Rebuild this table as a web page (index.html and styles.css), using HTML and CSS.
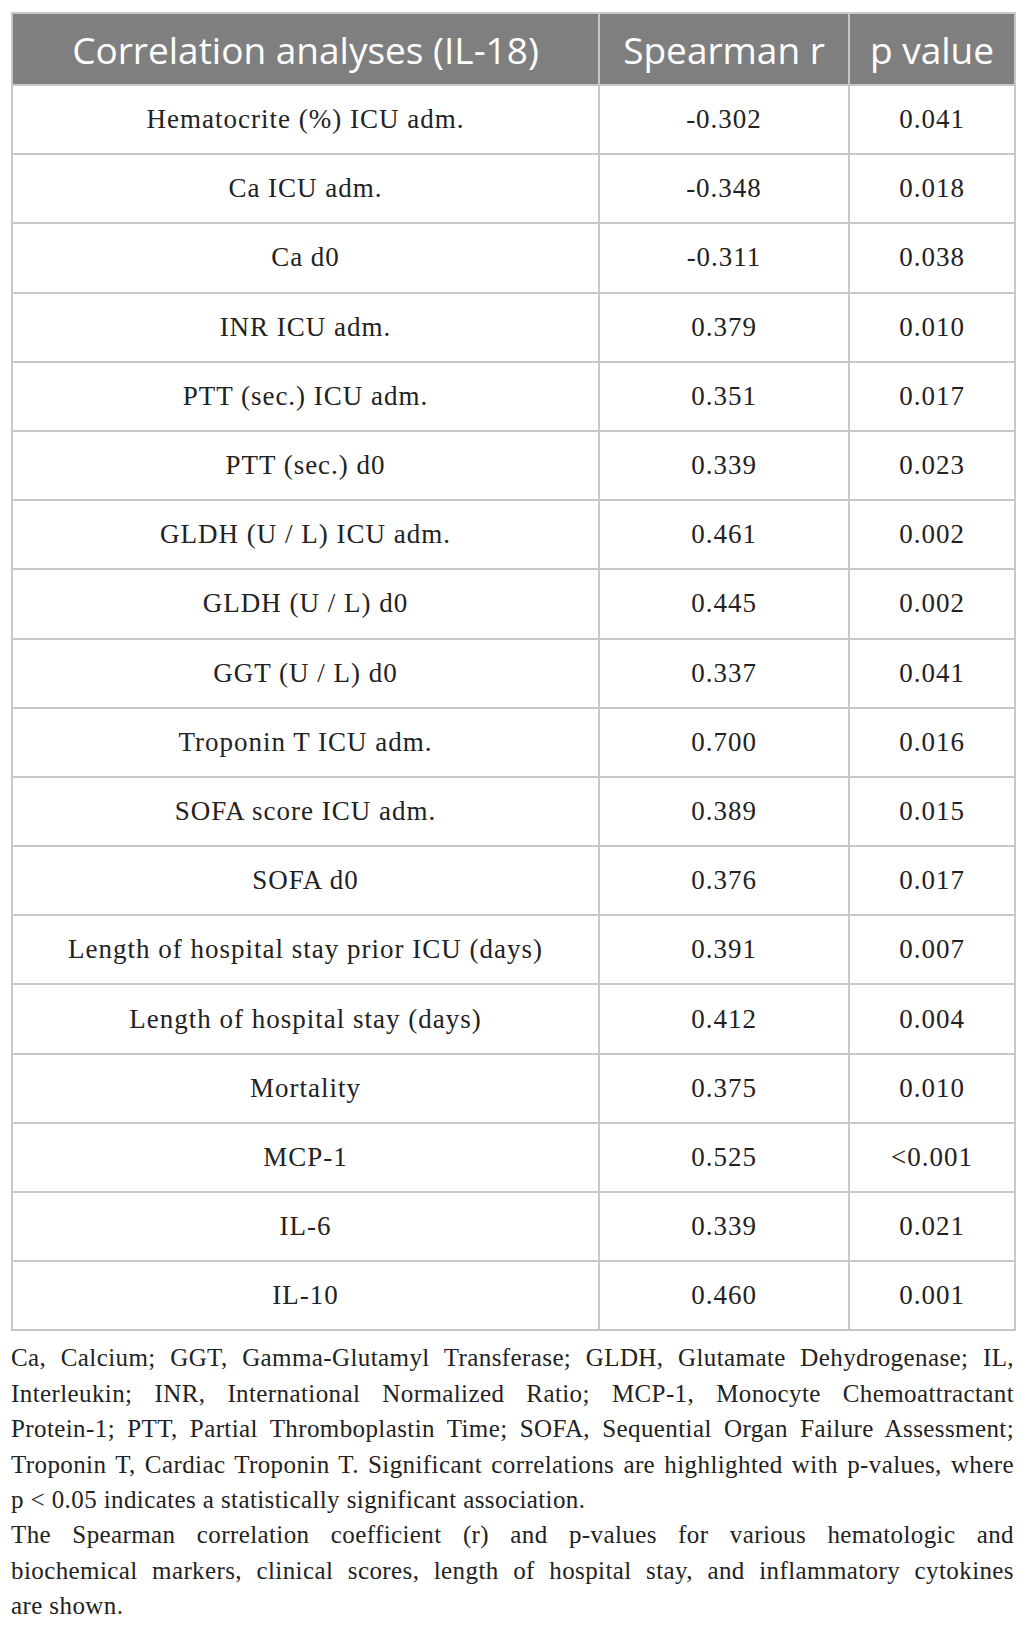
FILE: index.html
```html
<!DOCTYPE html>
<html>
<head>
<meta charset="utf-8">
<link rel="stylesheet" href="styles.css">
</head>
<body>
<div class="page">
<table class="tbl">
  <colgroup>
    <col class="c1"><col class="c2"><col class="c3">
  </colgroup>
  <thead>
    <tr><th>Correlation analyses (IL-18)</th><th>Spearman r</th><th>p value</th></tr>
  </thead>
  <tbody>
    <tr><td>Hematocrite (%) ICU adm.</td><td>-0.302</td><td>0.041</td></tr>
    <tr><td>Ca ICU adm.</td><td>-0.348</td><td>0.018</td></tr>
    <tr><td>Ca d0</td><td>-0.311</td><td>0.038</td></tr>
    <tr><td>INR ICU adm.</td><td>0.379</td><td>0.010</td></tr>
    <tr><td>PTT (sec.) ICU adm.</td><td>0.351</td><td>0.017</td></tr>
    <tr><td>PTT (sec.) d0</td><td>0.339</td><td>0.023</td></tr>
    <tr><td>GLDH (U / L) ICU adm.</td><td>0.461</td><td>0.002</td></tr>
    <tr><td>GLDH (U / L) d0</td><td>0.445</td><td>0.002</td></tr>
    <tr><td>GGT (U / L) d0</td><td>0.337</td><td>0.041</td></tr>
    <tr><td>Troponin T ICU adm.</td><td>0.700</td><td>0.016</td></tr>
    <tr><td>SOFA score ICU adm.</td><td>0.389</td><td>0.015</td></tr>
    <tr><td>SOFA d0</td><td>0.376</td><td>0.017</td></tr>
    <tr><td>Length of hospital stay prior ICU (days)</td><td>0.391</td><td>0.007</td></tr>
    <tr><td>Length of hospital stay (days)</td><td>0.412</td><td>0.004</td></tr>
    <tr><td>Mortality</td><td>0.375</td><td>0.010</td></tr>
    <tr><td>MCP-1</td><td>0.525</td><td>&lt;0.001</td></tr>
    <tr><td>IL-6</td><td>0.339</td><td>0.021</td></tr>
    <tr><td>IL-10</td><td>0.460</td><td>0.001</td></tr>
  </tbody>
</table>
<div class="notes">
  <p>
    <span class="ln">Ca, Calcium; GGT, Gamma-Glutamyl Transferase; GLDH, Glutamate Dehydrogenase; IL,</span>
    <span class="ln">Interleukin; INR, International Normalized Ratio; MCP-1, Monocyte Chemoattractant</span>
    <span class="ln">Protein-1; PTT, Partial Thromboplastin Time; SOFA, Sequential Organ Failure Assessment;</span>
    <span class="ln">Troponin T, Cardiac Troponin T. Significant correlations are highlighted with p-values, where</span>
    <span class="ln last">p &lt; 0.05 indicates a statistically significant association.</span>
  </p>
  <p>
    <span class="ln">The Spearman correlation coefficient (r) and p-values for various hematologic and</span>
    <span class="ln">biochemical markers, clinical scores, length of hospital stay, and inflammatory cytokines</span>
    <span class="ln last">are shown.</span>
  </p>
</div>
</div>
</body>
</html>
```

FILE: styles.css
```css
html, body {
  margin: 0;
  padding: 0;
  background: #ffffff;
}

.page {
  padding: 12px 12px 0 11px;
  width: 1003px;
}

.tbl {
  width: 1003px;
  border-collapse: collapse;
  table-layout: fixed;
  font-family: "Liberation Serif", "Times New Roman", serif;
  color: #222222;
}

.c1 { width: 587px; }
.c2 { width: 250px; }
.c3 { width: 166px; }

.tbl th {
  background: #7f7f7f;
  color: #ffffff;
  font-family: "Open Sans", "Noto Sans", sans-serif;
  font-weight: 400;
  font-size: 37px;
  line-height: 1;
  height: 70px;
  padding: 0;
  text-align: center;
  border: 2px solid #c8c8c8;
}

.tbl td {
  height: 67.2px;
  padding: 0;
  line-height: 1;
  text-align: center;
  font-size: 27px;
  letter-spacing: 1px;
  border: 2px solid #c8c8c8;
}

.notes {
  font-family: "Liberation Serif", "Times New Roman", serif;
  font-size: 25px;
  line-height: 35.4px;
  color: #222222;
  margin-top: 9px;
}

.notes p {
  margin: 0;
}

.ln {
  display: block;
  white-space: nowrap;
  text-align: justify;
  text-align-last: justify;
  letter-spacing: 0.4px;
}

.ln.last {
  text-align-last: left;
}
```
